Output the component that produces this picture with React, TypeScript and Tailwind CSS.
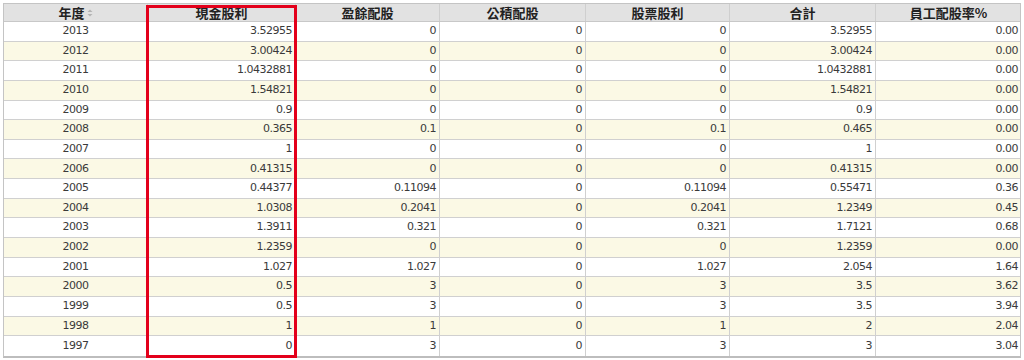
import React from "react";

const cols = ["年度", "現金股利", "盈餘配股", "公積配股", "股票股利", "合計", "員工配股率%"];

const rows: string[][] = [
  ["2013", "3.52955", "0", "0", "0", "3.52955", "0.00"],
  ["2012", "3.00424", "0", "0", "0", "3.00424", "0.00"],
  ["2011", "1.0432881", "0", "0", "0", "1.0432881", "0.00"],
  ["2010", "1.54821", "0", "0", "0", "1.54821", "0.00"],
  ["2009", "0.9", "0", "0", "0", "0.9", "0.00"],
  ["2008", "0.365", "0.1", "0", "0.1", "0.465", "0.00"],
  ["2007", "1", "0", "0", "0", "1", "0.00"],
  ["2006", "0.41315", "0", "0", "0", "0.41315", "0.00"],
  ["2005", "0.44377", "0.11094", "0", "0.11094", "0.55471", "0.36"],
  ["2004", "1.0308", "0.2041", "0", "0.2041", "1.2349", "0.45"],
  ["2003", "1.3911", "0.321", "0", "0.321", "1.7121", "0.68"],
  ["2002", "1.2359", "0", "0", "0", "1.2359", "0.00"],
  ["2001", "1.027", "1.027", "0", "1.027", "2.054", "1.64"],
  ["2000", "0.5", "3", "0", "3", "3.5", "3.62"],
  ["1999", "0.5", "3", "0", "3", "3.5", "3.94"],
  ["1998", "1", "1", "0", "1", "2", "2.04"],
  ["1997", "0", "3", "0", "3", "3", "3.04"],
];

const grid = "grid grid-cols-[144px_148px_144px_146px_144px_146px_145px]";

function SortIcon() {
  return (
    <svg width="6" height="8" viewBox="0 0 6 8" className="ml-[2px]">
      <path d="M3 0.5 L5.5 3 H0.5 Z" fill="#b4b4b4" />
      <path d="M3 7.5 L5.5 5 H0.5 Z" fill="#b4b4b4" />
    </svg>
  );
}

export default function App() {
  return (
    <div className="w-[1024px] h-[360px] bg-white pl-[3px] pt-[3px]">
      <div className="relative w-[1018px] border border-[#c4c4c4] border-b-2 border-b-[#bdbdbd]">
        <div className={`${grid} h-[18px] bg-[#e2e2e2] border-b border-[#c8c8c8]`}>
          {cols.map((c, i) => (
            <div
              key={c}
              className={`flex items-center justify-center text-[13px] font-bold text-[#222] ${i < 6 ? "border-r border-[#cfcfcf]" : ""}`}
              style={{ fontFamily: '"Noto Sans CJK TC", "Noto Sans", sans-serif' }}
            >
              <span className="leading-none">{c}</span>
              {i === 0 && <SortIcon />}
            </div>
          ))}
        </div>
        {rows.map((r, ri) => (
          <div
            key={r[0]}
            className={`${grid} h-[19.65px] ${ri < rows.length - 1 ? "border-b border-[#d0d0d0]" : ""} ${ri % 2 === 1 ? "bg-[#fbf9e5]" : "bg-white"}`}
          >
            {r.map((v, ci) => (
              <div
                key={ci}
                className={`flex items-center text-[11px] tracking-[-0.5px] text-[#3a3a3a] ${ci === 0 ? "justify-center" : "justify-end pr-[3px]"} ${ci < 6 ? "border-r border-[#d0d0d0]" : ""}`}
                style={{ fontFamily: '"DejaVu Sans", sans-serif' }}
              >
                {v}
              </div>
            ))}
          </div>
        ))}
        <div className="absolute left-[142px] top-[1px] w-[151px] bottom-[-2px] border-[3px] border-[#e3001b]" />
      </div>
    </div>
  );
}
